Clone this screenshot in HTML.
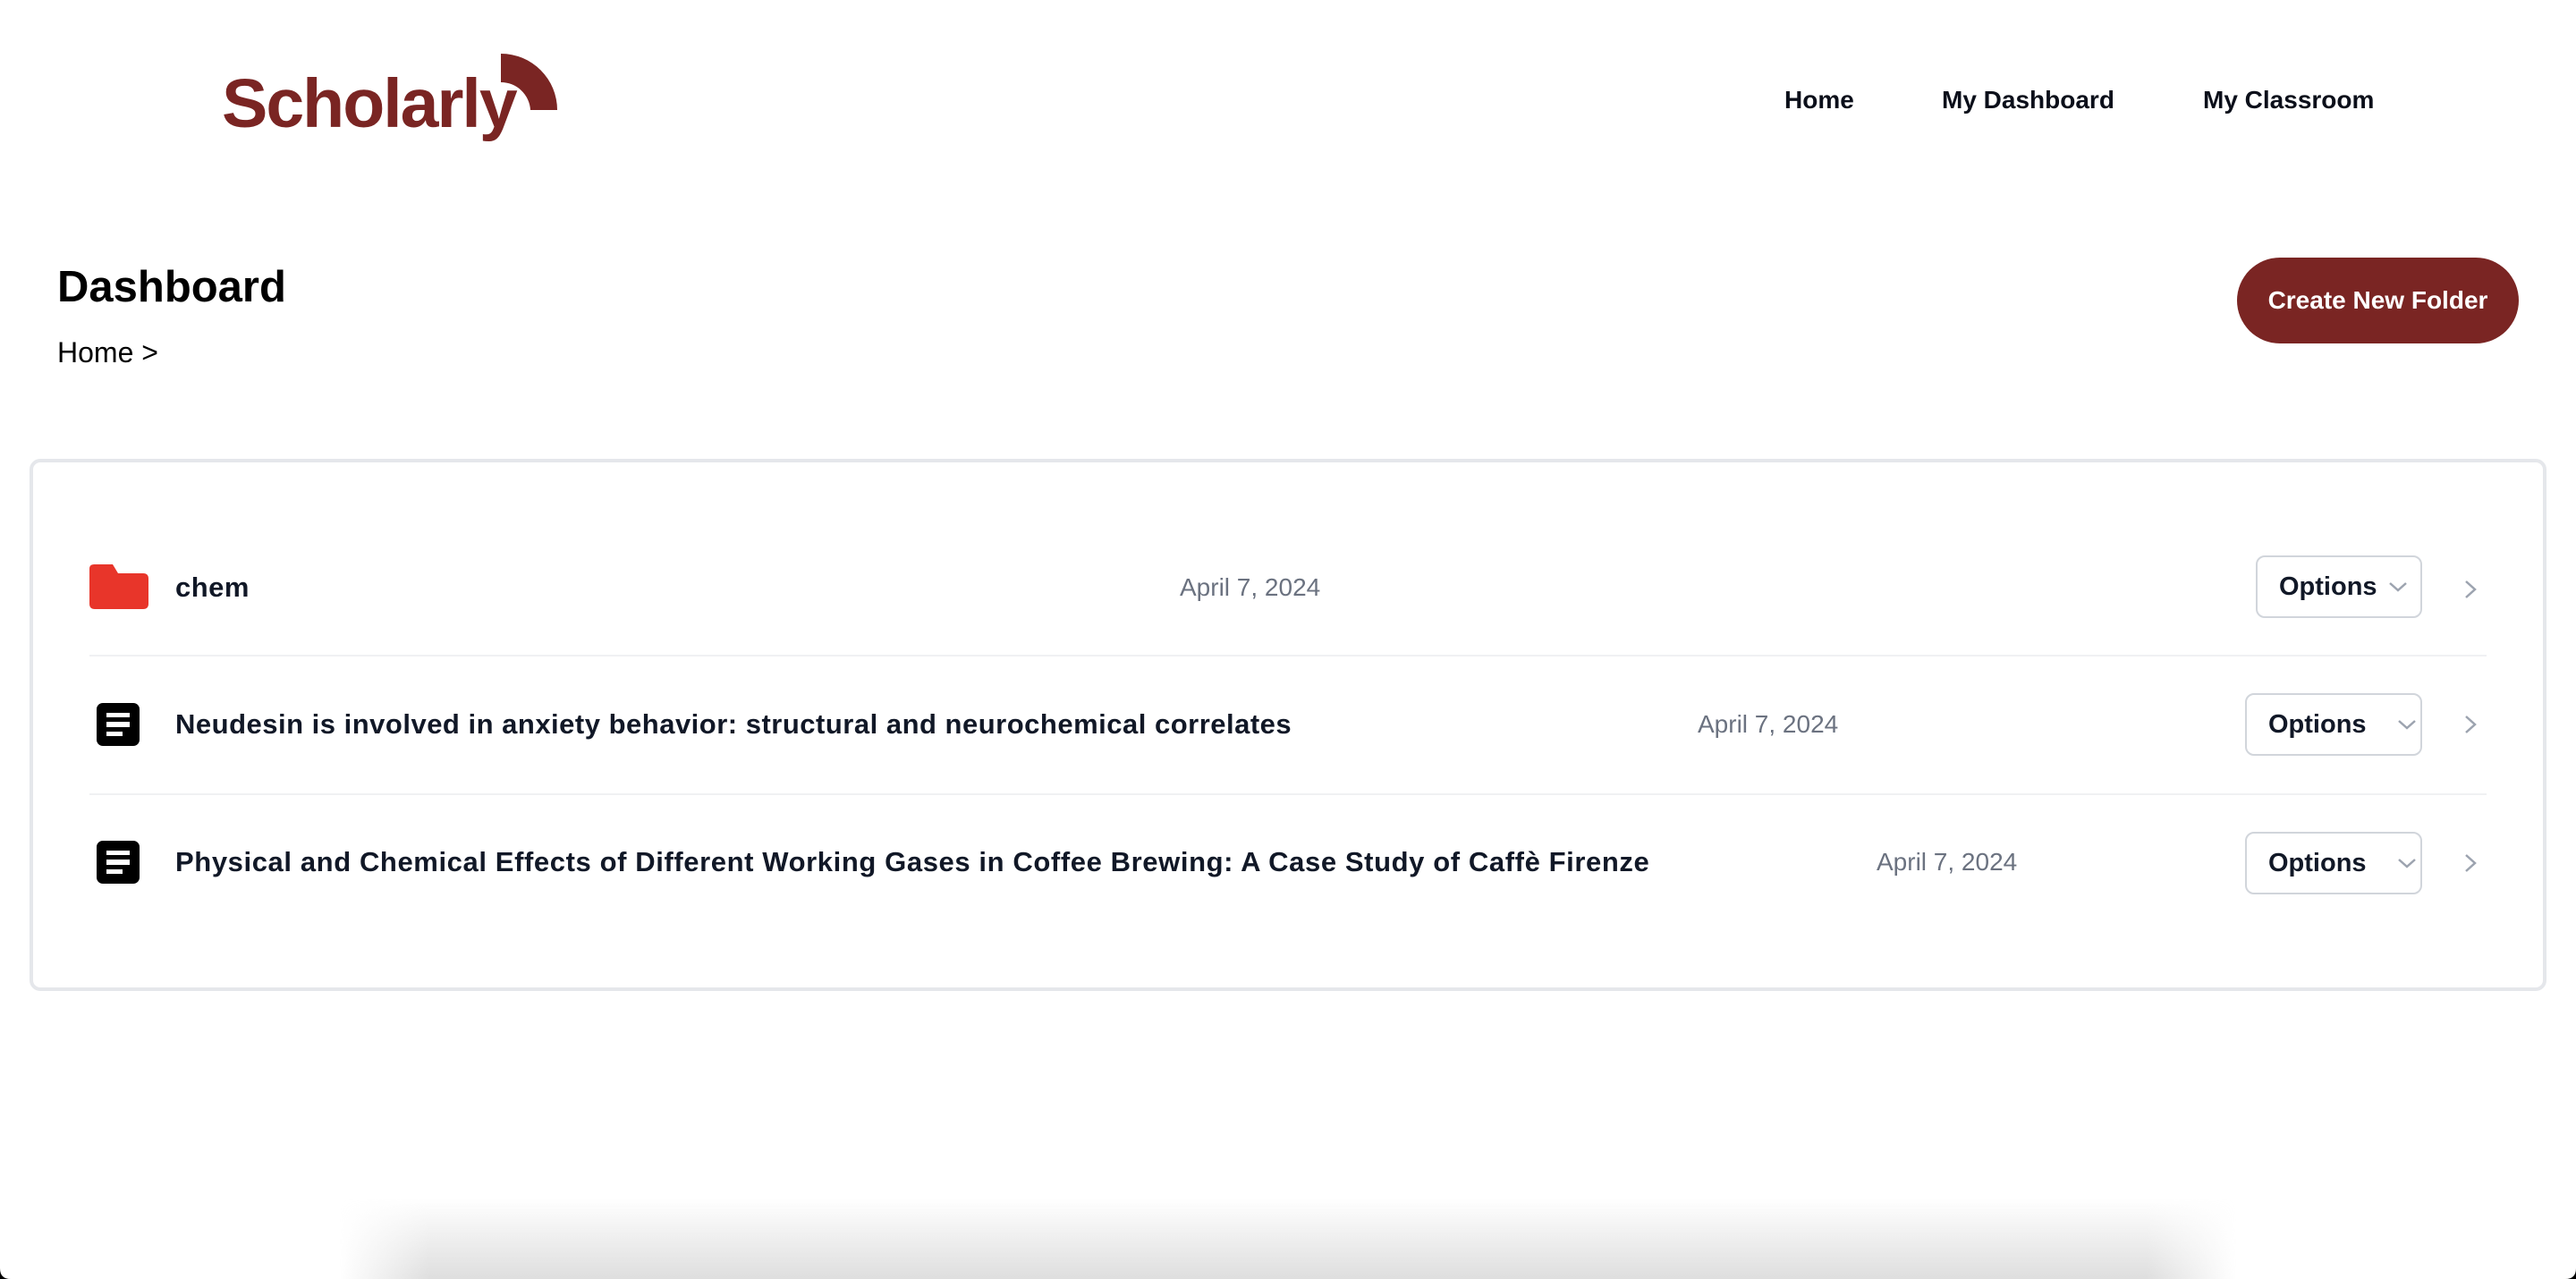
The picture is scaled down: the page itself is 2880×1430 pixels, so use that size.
<!DOCTYPE html>
<html><head><meta charset="utf-8"><style>
*{margin:0;padding:0;box-sizing:border-box}
html,body{width:2880px;height:1430px;overflow:hidden;background:#fff;font-family:"Liberation Sans",Arial,sans-serif;color:#111827}
#w{position:relative;width:2880px;height:1430px;overflow:hidden}
.a{position:absolute;white-space:nowrap}
.nav{font-size:28px;font-weight:bold;color:#0b0f1a;top:96px}
.row{font-size:31px;font-weight:bold;color:#111827;letter-spacing:0.5px}
.date{font-size:28px;color:#6b7280}
.opt{border:2px solid #d1d5db;border-radius:10px;height:70px;font-size:29px;font-weight:bold;color:#111827;display:flex;align-items:center;padding-left:24px}
.div{height:2px;background:#f0f1f3;left:100px;width:2680px}
</style></head><body><div id="w">
<div class="a" style="left:248px;top:72px;font-size:77px;font-weight:bold;color:#7a2523;letter-spacing:-2px">Scholarly</div>
<svg class="a" style="left:0;top:0" width="700" height="200"><path d="M560 60 A63 63 0 0 1 623 123 L593 123 A33 33 0 0 0 560 92 Z" fill="#7a2523"/></svg>
<div class="a nav" style="left:1995px">Home</div>
<div class="a nav" style="left:2171px">My Dashboard</div>
<div class="a nav" style="left:2463px">My Classroom</div>
<div class="a" style="left:64px;top:293px;font-size:49px;font-weight:bold;color:#000">Dashboard</div>
<div class="a" style="left:64px;top:376px;font-size:32px;color:#000">Home &gt;</div>
<div class="a" style="left:2501px;top:288px;width:315px;height:96px;border-radius:48px;background:#7a2523;color:#fff;font-size:28px;font-weight:bold;display:flex;align-items:center;justify-content:center">Create New Folder</div>
<div class="a" style="left:33px;top:513px;width:2814px;height:595px;border:4px solid #e5e7eb;border-radius:12px"></div>
<svg class="a" style="left:100px;top:631px" width="66" height="50"><path d="M5 0 H26 L32 10 H60 Q66 10 66 16 V44 Q66 50 60 50 H6 Q0 50 0 44 V5 Q0 0 5 0Z" fill="#e8352a"/></svg>
<div class="a row" style="left:196px;top:639px">chem</div>
<div class="a date" style="left:1319px;top:641px">April 7, 2024</div>
<div class="a opt" style="left:2522px;top:621px;width:186px">Options<svg style="margin-left:12px" width="22" height="14"><path d="M2 3 L11 11 L20 3" stroke="#9ca3af" stroke-width="2.5" fill="none"/></svg></div>
<svg class="a" style="left:2752px;top:647px" width="20" height="24"><path d="M5 3 L15 12 L5 21" stroke="#9ca3af" stroke-width="2.5" fill="none"/></svg>
<div class="a div" style="top:732px"></div>
<svg class="a" style="left:108px;top:786px" width="48" height="48"><rect width="48" height="48" rx="7" fill="#000"/><rect x="11" y="11" width="26" height="5" fill="#fff"/><rect x="11" y="21" width="26" height="6" fill="#fff"/><rect x="11" y="32" width="18" height="5" fill="#fff"/></svg>
<div class="a row" style="left:196px;top:792px">Neudesin is involved in anxiety behavior: structural and neurochemical correlates</div>
<div class="a date" style="left:1898px;top:794px">April 7, 2024</div>
<div class="a opt" style="left:2510px;top:775px;width:198px">Options<svg style="margin-left:34px" width="22" height="14"><path d="M2 3 L11 11 L20 3" stroke="#9ca3af" stroke-width="2.5" fill="none"/></svg></div>
<svg class="a" style="left:2752px;top:798px" width="20" height="24"><path d="M5 3 L15 12 L5 21" stroke="#9ca3af" stroke-width="2.5" fill="none"/></svg>
<div class="a div" style="top:887px"></div>
<svg class="a" style="left:108px;top:940px" width="48" height="48"><rect width="48" height="48" rx="7" fill="#000"/><rect x="11" y="11" width="26" height="5" fill="#fff"/><rect x="11" y="21" width="26" height="6" fill="#fff"/><rect x="11" y="32" width="18" height="5" fill="#fff"/></svg>
<div class="a row" style="left:196px;top:946px;letter-spacing:0.6px">Physical and Chemical Effects of Different Working Gases in Coffee Brewing: A Case Study of Caffè Firenze</div>
<div class="a date" style="left:2098px;top:948px">April 7, 2024</div>
<div class="a opt" style="left:2510px;top:930px;width:198px">Options<svg style="margin-left:34px" width="22" height="14"><path d="M2 3 L11 11 L20 3" stroke="#9ca3af" stroke-width="2.5" fill="none"/></svg></div>
<svg class="a" style="left:2752px;top:953px" width="20" height="24"><path d="M5 3 L15 12 L5 21" stroke="#9ca3af" stroke-width="2.5" fill="none"/></svg>
<div class="a" style="left:380px;top:1340px;width:2120px;height:90px;background:linear-gradient(to bottom,rgba(220,220,220,0),#dedede);-webkit-mask-image:linear-gradient(to right,transparent 0,#000 100px,#000 2020px,transparent 2120px)"></div>
<svg class="a" style="left:0;top:1418px" width="2880" height="12"><path d="M0 0 Q0 12 12 12 H0Z" fill="#000"/><path d="M2880 0 Q2880 12 2868 12 H2880Z" fill="#000"/></svg>
</div></body></html>
